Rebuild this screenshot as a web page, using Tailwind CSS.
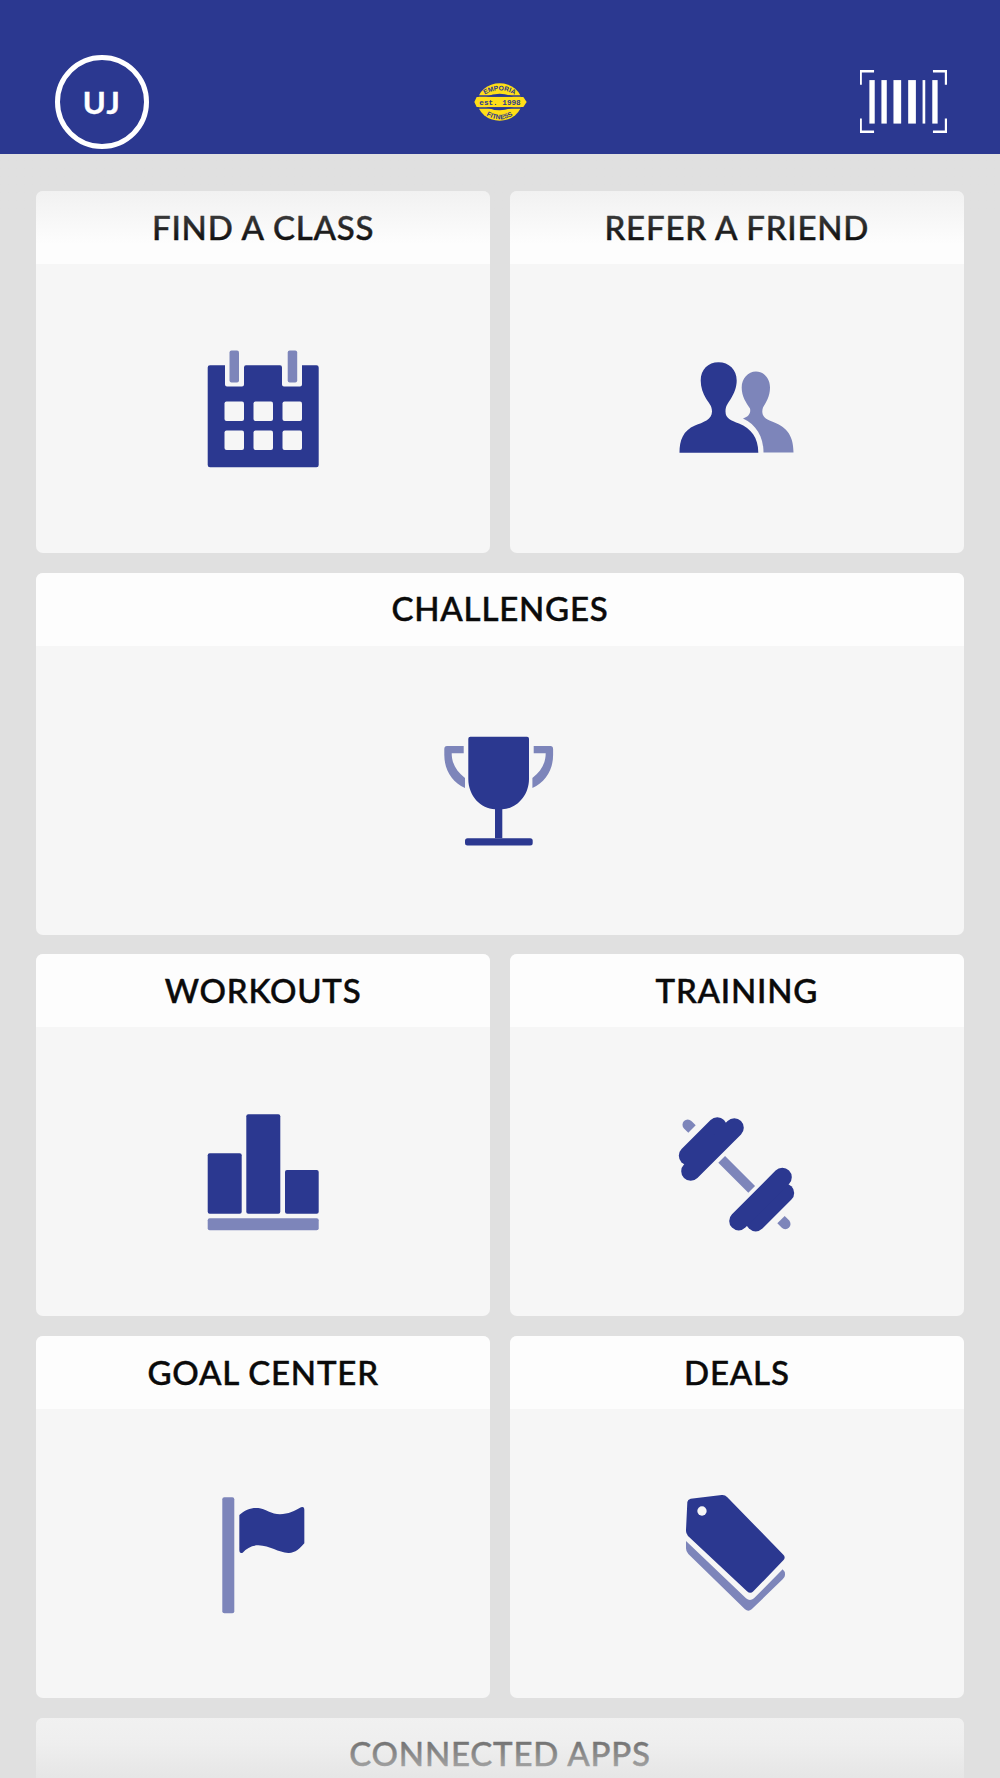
<!doctype html>
<html>
<head>
<meta charset="utf-8">
<script src="https://cdn.jsdelivr.net/npm/@tailwindcss/browser@4"></script>
</head>
<body class="m-0">
<div class="relative w-[1000px] h-[1778px] overflow-hidden bg-[#e0e0e0] font-['Lato','Liberation_Sans',sans-serif]">
  <header class="grid grid-cols-[1fr_auto_1fr] items-center h-[154px] pt-[55px] pb-[5px] px-[53px] bg-[#2b3890]">
    <div class="ml-[2px] flex h-[94px] w-[94px] items-center justify-center rounded-full border-[5px] border-white text-[31px] font-bold tracking-[1.5px] text-white [-webkit-text-stroke:0.4px_white]">UJ</div>
    <svg class="block -mt-[4px]" width="120" height="80" viewBox="0 0 360 240">
      <ellipse cx="179" cy="126" rx="66" ry="56" fill="#ffde17"/>
      <path d="M138 110 Q179 92 220 110 Z M138 142 Q179 160 220 142 Z" fill="#2b3890"/>
      <path d="M100 108 H258 M100 144 H258" stroke="#2b3890" stroke-width="5"/>
      <path d="M103 126 L110 111 H250 L260 126 L250 141 H110 Z" fill="#ffde17"/>
      <path id="logoTop" d="M128 108 Q179 74 230 108" fill="none"/>
      <path id="logoBottom" d="M128 158 Q179 198 230 158" fill="none"/>
      <text font-family="Liberation Sans, sans-serif" font-size="20" font-weight="700" fill="#2b3890" text-anchor="middle"><textPath href="#logoTop" startOffset="50%">EMPORIA</textPath></text>
      <text font-family="Liberation Sans, sans-serif" font-size="20" font-weight="700" fill="#2b3890" text-anchor="middle"><textPath href="#logoBottom" startOffset="50%">FITNESS</textPath></text>
      <text x="180" y="134" font-family="Liberation Mono, monospace" font-size="23" font-weight="700" fill="#2b3890" text-anchor="middle">est. 1998</text>
    </svg>
    <svg class="block justify-self-end -mt-[1px]" width="87" height="63" viewBox="60 60 260 188">
      <path d="M62 104 V63.500 H102 M278 63.500 H317 V104 M62 205 V244.500 H102 M278 244.500 H317 V205" fill="none" stroke="#fff" stroke-width="7"/>
      <g fill="#fff">
        <rect x="88" y="90" width="16" height="130"/>
        <rect x="124" y="90" width="16" height="130"/>
        <rect x="160" y="90" width="23" height="130"/>
        <rect x="204" y="90" width="23" height="130"/>
        <rect x="247" y="90" width="8" height="130"/>
        <rect x="276" y="90" width="16" height="130"/>
      </g>
    </svg>
  </header>

  <main class="grid grid-cols-2 auto-rows-[362px] gap-x-[19.5px] gap-y-[19.65px] px-9 pt-[37px]">
    <section class="flex flex-col overflow-hidden rounded-[7px] bg-[#f6f6f6]">
      <h2 class="flex h-[73px] items-center justify-center bg-[#fdfdfd] text-[33px] font-medium tracking-[0.8px] text-[#0a0a0a] [-webkit-text-stroke:0.5px_#0a0a0a]">FIND A CLASS</h2>
      <div class="flex flex-1 items-center justify-center">
        <svg class="block" width="160" height="160" viewBox="183 328.500 160 160">
          <path d="M225 364.700 H210 Q207.700 364.700 207.700 367 V464.500 Q207.700 466.700 210 466.700 H316.500 Q318.700 466.700 318.700 464.500 V367 Q318.700 364.700 316.500 364.700 H302 V384 Q302 386 300 386 H284 Q282 386 282 384 V367 Q282 364.700 280 364.700 H246 Q244 364.700 244 367 V384 Q244 386 242 386 H227 Q225 386 225 384 Z" fill="#2b3890"/>
          <rect x="229.500" y="350" width="9.500" height="32" rx="2" fill="#7d85ba"/>
          <rect x="287.700" y="350" width="9.500" height="32" rx="2" fill="#7d85ba"/>
          <g fill="#f6f6f6">
            <rect x="224.500" y="401" width="19.500" height="19.500" rx="2"/>
            <rect x="253.500" y="401" width="19.500" height="19.500" rx="2"/>
            <rect x="282.500" y="401" width="19.500" height="19.500" rx="2"/>
            <rect x="224.500" y="430" width="19.500" height="19.500" rx="2"/>
            <rect x="253.500" y="430" width="19.500" height="19.500" rx="2"/>
            <rect x="282.500" y="430" width="19.500" height="19.500" rx="2"/>
          </g>
        </svg>
      </div>
    </section>
    <section class="flex flex-col overflow-hidden rounded-[7px] bg-[#f6f6f6]">
      <h2 class="flex h-[73px] items-center justify-center bg-[#fdfdfd] text-[33px] font-medium tracking-[0.8px] text-[#0a0a0a] [-webkit-text-stroke:0.5px_#0a0a0a]">REFER A FRIEND</h2>
      <div class="flex flex-1 items-center justify-center">
        <svg class="block" width="160" height="160" viewBox="657 328.500 160 160">
          <path d="M743 418 C749 416 751 412 750 408 C746 402 741.700 396 741.700 387 C741.700 378 748 371 756 371 C764 371 770 378 770 387 C770 396 766 402 763 407 C761 413 763 418 772 421 C785 426 793.500 433 793.500 452 L763.500 452 C763.500 436 756 424 743 418 Z" fill="#7d85ba"/>
          <path d="M679.500 452.300 C679.500 440 683 430 695 425 C703 422 712 419 712 411 C712 405 709 403 706 398 C703 393 700.700 387 700.700 380 C700.700 369 708 361.700 718.500 361.700 C729 361.700 736.700 369 736.700 380 C736.700 387 734 393 731 398 C728 403 725.500 405 725.500 411 C725.500 418 731 420 739 423 C751 428 758.300 437 758.300 452.300 Z" fill="#2b3890"/>
        </svg>
      </div>
    </section>
    <section class="col-span-2 flex flex-col overflow-hidden rounded-[7px] bg-[#f6f6f6]">
      <h2 class="flex h-[73px] items-center justify-center bg-[#fdfdfd] text-[33px] font-medium tracking-[0.8px] text-[#0a0a0a] [-webkit-text-stroke:0.5px_#0a0a0a]">CHALLENGES</h2>
      <div class="flex flex-1 items-center justify-center">
        <svg class="block" width="160" height="160" viewBox="420 710 160 160">
          <path d="M463.700 746 H447 Q444.300 746 444.300 749 V755 C444.300 770 452 782 465 788 V778 C456 771 451.700 763 451.700 753.300 H463.700 Z" fill="#7d85ba"/>
          <path d="M533.700 746 H550.400 Q553.100 746 553.100 749 V755 C553.100 770 545.400 782 532.400 788 V778 C541.400 771 545.700 763 545.700 753.300 H533.700 Z" fill="#7d85ba"/>
          <path d="M470.300 736.700 H527 Q529 736.700 529 738.700 V779 C529 796 516 809 502.300 809.300 V838.300 H495 V809.300 C481 809 468.300 796 468.300 779 V738.700 Q468.300 736.700 470.300 736.700 Z" fill="#2b3890"/>
          <rect x="465" y="838.300" width="67.700" height="7.300" rx="2.500" fill="#2b3890"/>
        </svg>
      </div>
    </section>
    <section class="flex flex-col overflow-hidden rounded-[7px] bg-[#f6f6f6]">
      <h2 class="flex h-[73px] items-center justify-center bg-[#fdfdfd] text-[33px] font-medium tracking-[0.8px] text-[#0a0a0a] [-webkit-text-stroke:0.5px_#0a0a0a]">WORKOUTS</h2>
      <div class="flex flex-1 items-center justify-center">
        <svg class="block" width="160" height="160" viewBox="183 1091 160 160">
          <g fill="#2b3890">
            <rect x="207.700" y="1152.300" width="34" height="60.400" rx="2"/>
            <rect x="246.300" y="1113.300" width="34" height="99.400" rx="2"/>
            <rect x="285" y="1169" width="33.700" height="43.700" rx="2"/>
          </g>
          <rect x="207.700" y="1217.300" width="111" height="12" rx="2" fill="#7d85ba"/>
        </svg>
      </div>
    </section>
    <section class="flex flex-col overflow-hidden rounded-[7px] bg-[#f6f6f6]">
      <h2 class="flex h-[73px] items-center justify-center bg-[#fdfdfd] text-[33px] font-medium tracking-[0.8px] text-[#0a0a0a] [-webkit-text-stroke:0.5px_#0a0a0a]">TRAINING</h2>
      <div class="flex flex-1 items-center justify-center">
        <svg class="block" width="160" height="160" viewBox="657 1091 160 160">
          <line x1="721.700" y1="1158.300" x2="751.700" y2="1188.300" stroke="#7d85ba" stroke-width="9.500"/>
          <g>
            <path d="M695.700 1124.300 L688.300 1131.700 L684 1127.400 A5.200 5.200 0 0 1 691.400 1120 Z" fill="#7d85ba"/>
            <line x1="688.300" y1="1154.700" x2="717.300" y2="1125.700" stroke="#2b3890" stroke-width="19" stroke-linecap="round"/>
            <line x1="690.700" y1="1170.300" x2="734.300" y2="1126.700" stroke="#2b3890" stroke-width="19" stroke-linecap="round"/>
          </g>
          <g transform="rotate(180 736.500 1173.300)">
            <path d="M695.700 1124.300 L688.300 1131.700 L684 1127.400 A5.200 5.200 0 0 1 691.400 1120 Z" fill="#7d85ba"/>
            <line x1="688.300" y1="1154.700" x2="717.300" y2="1125.700" stroke="#2b3890" stroke-width="19" stroke-linecap="round"/>
            <line x1="690.700" y1="1170.300" x2="734.300" y2="1126.700" stroke="#2b3890" stroke-width="19" stroke-linecap="round"/>
          </g>
        </svg>
      </div>
    </section>
    <section class="flex flex-col overflow-hidden rounded-[7px] bg-[#f6f6f6]">
      <h2 class="flex h-[73px] items-center justify-center bg-[#fdfdfd] text-[33px] font-medium tracking-[0.8px] text-[#0a0a0a] [-webkit-text-stroke:0.5px_#0a0a0a]">GOAL CENTER</h2>
      <div class="flex flex-1 items-center justify-center">
        <svg class="block" width="160" height="160" viewBox="183 1473 160 160">
          <rect x="222.300" y="1497.300" width="12" height="116" rx="2" fill="#7d85ba"/>
          <g transform="translate(200 1480) scale(.33333)">
            <path d="M118 105 C135 88 155 82 175 84 C195 86 215 103 240 103 C265 103 285 92 303 82 Q313 78 313 90 V190 C300 205 285 220 265 219 C235 218 210 197 175 196 C155 196 140 205 128 218 Q118 222 118 210 Z" fill="#2b3890"/>
          </g>
        </svg>
      </div>
    </section>
    <section class="flex flex-col overflow-hidden rounded-[7px] bg-[#f6f6f6]">
      <h2 class="flex h-[73px] items-center justify-center bg-[#fdfdfd] text-[33px] font-medium tracking-[0.8px] text-[#0a0a0a] [-webkit-text-stroke:0.5px_#0a0a0a]">DEALS</h2>
      <div class="flex flex-1 items-center justify-center">
        <svg class="block" width="160" height="160" viewBox="657 1473 160 160">
          <g transform="translate(670 1480) scale(.33333)">
            <path d="M48 183 L228 355 Q240 365 252 355 L338 268 Q346 275 345 285 Q345 292 338 298 L245 388 Q235 396 225 388 L55 222 Q48 215 48 205 Z" fill="#7d85ba"/>
            <path d="M62 56 L155 45 Q165 44 172 52 L340 224 Q348 232 340 241 L250 334 Q241 343 231 334 L54 168 Q47 160 48 150 L52 66 Q53 58 62 56 Z" fill="#2b3890"/>
            <circle cx="96" cy="93" r="14" fill="#f6f6f6"/>
          </g>
        </svg>
      </div>
    </section>
    <section class="col-span-2 flex flex-col overflow-hidden rounded-[7px] bg-[#f6f6f6]">
      <h2 class="flex h-[73px] items-center justify-center bg-[#fdfdfd] text-[33px] font-medium tracking-[0.8px] text-[#0a0a0a] [-webkit-text-stroke:0.5px_#0a0a0a]">CONNECTED APPS</h2>
    </section>
  </main>

  <div class="absolute left-0 right-0 top-[154px] h-[90px] bg-gradient-to-b from-[#e0e0e0] to-[#e0e0e0]/0 opacity-70"></div>
  <div class="absolute left-0 right-0 bottom-0 h-[78px] bg-[linear-gradient(to_bottom,rgba(224,224,224,0)_0%,rgba(224,224,224,0.42)_22%,rgba(224,224,224,0.5)_55%,rgba(224,224,224,0.8)_100%)]"></div>
</div>
</body>
</html>
